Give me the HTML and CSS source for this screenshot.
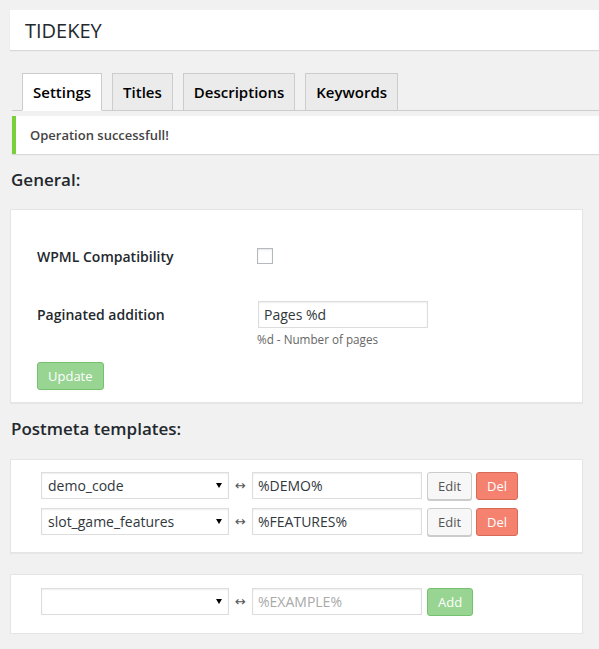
FILE: index.html
```html
<!DOCTYPE html>
<html lang="en">
<head>
<meta charset="utf-8">
<title>TIDEKEY</title>
<link rel="stylesheet" href="styles.css">
</head>
<body>
<div class="wrap">
  <header class="title-bar"><h1>TIDEKEY</h1></header>

  <nav class="tabs">
    <a class="tab tab-active" href="#">Settings</a>
    <a class="tab" href="#">Titles</a>
    <a class="tab" href="#">Descriptions</a>
    <a class="tab" href="#">Keywords</a>
  </nav>

  <div class="notice"><p>Operation successfull!</p></div>

  <h2 class="section-title">General:</h2>
  <section class="card card-general">
    <div class="field-row field-row-check">
      <label class="field-label" for="wpml">WPML Compatibility</label>
      <div class="field-control"><input id="wpml" class="checkbox" type="checkbox"></div>
    </div>
    <div class="field-row field-row-text">
      <label class="field-label" for="paged">Paginated addition</label>
      <div class="field-control">
        <input id="paged" class="text-input text-input-short" type="text" value="Pages %d">
        <p class="hint">%d - Number of pages</p>
      </div>
    </div>
    <button class="btn btn-success btn-update" type="button">Update</button>
  </section>

  <h2 class="section-title section-title-spaced">Postmeta templates:</h2>
  <section class="card card-templates">
    <div class="template-row">
      <span class="select-wrap"><select class="select"><option>demo_code</option></select></span>
      <span class="link-arrow">↔</span>
      <input class="text-input" type="text" value="%DEMO%">
      <button class="btn btn-default" type="button">Edit</button>
      <button class="btn btn-danger" type="button">Del</button>
    </div>
    <div class="template-row">
      <span class="select-wrap"><select class="select"><option>slot_game_features</option></select></span>
      <span class="link-arrow">↔</span>
      <input class="text-input" type="text" value="%FEATURES%">
      <button class="btn btn-default" type="button">Edit</button>
      <button class="btn btn-danger" type="button">Del</button>
    </div>
  </section>

  <section class="card card-templates card-add">
    <div class="template-row">
      <span class="select-wrap"><select class="select"><option></option></select></span>
      <span class="link-arrow">↔</span>
      <input class="text-input" type="text" placeholder="%EXAMPLE%">
      <button class="btn btn-success" type="button">Add</button>
    </div>
  </section>
</div>
</body>
</html>
```

FILE: styles.css
```css
* {
  box-sizing: border-box;
}

html, body {
  margin: 0;
  padding: 0;
}

body {
  background: #f1f1f1;
  font-family: "Open Sans", "Noto Sans", sans-serif;
  color: #23282d;
}

.wrap {
  padding: 10px 0 0 10px;
}

/* Title bar */
.title-bar {
  height: 40px;
  display: flex;
  align-items: center;
  padding-left: 15px;
  background: #fff;
  box-shadow: 0 1px 1px rgba(0, 0, 0, 0.1);
}

.title-bar h1 {
  margin: 0;
  font-size: 20px;
  font-weight: 400;
  color: #23282d;
}

/* Tabs */
.tabs {
  display: flex;
  align-items: flex-end;
  margin: 23px 0 0 2px;
  border-bottom: 1px solid #ccc;
}

.tab {
  display: flex;
  align-items: center;
  height: 38px;
  margin: 0 0 -1px 10px;
  padding: 0 10px;
  border: 1px solid #ccc;
  background: #ebebeb;
  color: #000;
  font-size: 15px;
  font-weight: 600;
  text-decoration: none;
}

.tab-active {
  background: #fff;
  border-bottom-color: #fff;
}

/* Notice */
.notice {
  height: 38px;
  display: flex;
  align-items: center;
  margin: 5px 0 0 2px;
  padding-left: 14px;
  background: #fff;
  border-left: 4px solid #7ad03a;
  box-shadow: 0 1px 1px rgba(0, 0, 0, 0.1);
}

.notice p {
  margin: 0;
  font-size: 13px;
  font-weight: 600;
  color: #444;
}

/* Section headings */
.section-title {
  margin: 14px 0 18px 1px;
  font-size: 17px;
  line-height: 23px;
  font-weight: 600;
  color: #23282d;
}

.section-title-spaced {
  margin-bottom: 19px;
}

/* Cards */
.card {
  margin-right: 16px;
  background: #fff;
  border: 1px solid #e5e5e5;
  box-shadow: 0 1px 1px rgba(0, 0, 0, 0.04);
}

.card-general {
  padding: 32px 26px 12px 26px;
}

.field-row {
  display: grid;
  grid-template-columns: 220px 1fr;
}

.field-row-check {
  height: 28px;
  align-items: center;
}

.field-row-text {
  margin-top: 31px;
}

.field-label {
  font-size: 14px;
  font-weight: 600;
  line-height: 27px;
  color: #23282d;
}

.field-control {
  display: flex;
  flex-direction: column;
  align-items: flex-start;
}

.checkbox {
  appearance: none;
  -webkit-appearance: none;
  width: 16px;
  height: 16px;
  margin: 0;
  border: 1px solid #b4b9be;
  background: #fff;
  box-shadow: inset 0 1px 2px rgba(0, 0, 0, 0.1);
}

.hint {
  margin: 3px 0 0 0;
  font-size: 11.7px;
  line-height: 16px;
  color: #666;
}

/* Inputs */
.text-input {
  width: 170px;
  height: 27px;
  margin: 0;
  padding: 0 5px;
  border: 1px solid #ddd;
  background: #fff;
  box-shadow: inset 0 1px 2px rgba(0, 0, 0, 0.07);
  font-family: "Open Sans", sans-serif;
  font-size: 14px;
  color: #32373c;
  outline: none;
}

.text-input-short {
  margin-left: 1px;
}

.text-input::placeholder {
  color: #a9a9a9;
}

.select-wrap {
  position: relative;
  display: inline-block;
  width: 188px;
  height: 27px;
}

.select-wrap::after {
  content: "";
  position: absolute;
  right: 7px;
  top: 11px;
  border-left: 3px solid transparent;
  border-right: 3px solid transparent;
  border-top: 5px solid #000;
  pointer-events: none;
}

.select {
  appearance: none;
  -webkit-appearance: none;
  width: 188px;
  height: 27px;
  margin: 0;
  padding: 0 20px 0 6px;
  border: 1px solid #ddd;
  border-radius: 0;
  background: #fff;
  box-shadow: inset 0 1px 2px rgba(0, 0, 0, 0.07);
  font-family: "Open Sans", sans-serif;
  font-size: 14px;
  color: #32373c;
}

.link-arrow {
  width: 23px;
  text-align: center;
  font-family: "DejaVu Sans", sans-serif;
  font-size: 13px;
  line-height: 27px;
  color: #555;
}

/* Buttons */
.btn {
  height: 28px;
  margin: 0;
  padding: 0 10px;
  border: 1px solid;
  border-radius: 3px;
  font-family: "Open Sans", sans-serif;
  font-size: 13px;
  line-height: 26px;
  cursor: pointer;
}

.btn-default {
  background: #f7f7f7;
  border-color: #ccc;
  color: #555;
  box-shadow: 0 1px 0 #ccc;
}

.btn-danger {
  background: #f4826f;
  border-color: #d66a58;
  color: #fff;
}

.btn-success {
  background: #98d492;
  border-color: #76c16f;
  color: #fff;
}

.btn-update {
  margin-top: 15px;
}

/* Template rows */
.card-templates {
  padding: 12px 30px 16px 30px;
}

.card-add {
  margin-top: 21px;
  padding-top: 13px;
  padding-bottom: 17px;
}

.template-row {
  display: flex;
  align-items: flex-start;
}

.template-row + .template-row {
  margin-top: 8px;
}

.template-row .text-input {
  margin-right: 5px;
}

.template-row .btn + .btn {
  margin-left: 4px;
}
```
